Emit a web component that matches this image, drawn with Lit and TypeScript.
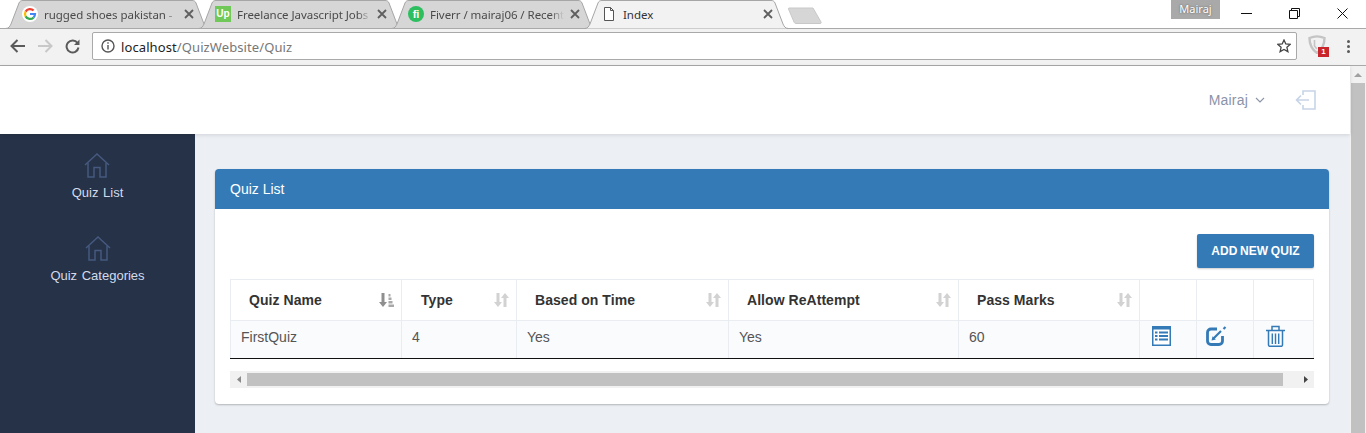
import { css, html, LitElement, svg } from "lit";
import { customElement } from "lit/decorators.js";

const tabShape = svg`<svg class="tab-bg" width="205" height="29" viewBox="0 0 205 29">
    <path d="M0.5 28.5 C4 28.5 5 26 6 24 L14 3 C15 1 16 0.5 18 0.5 H187 C189 0.5 190 1 191 3 L199 24 C200 26 201 28.5 204.5 28.5" />
</svg>`;

const houseIcon = html`<svg width="26" height="25" viewBox="0 0 26 25" fill="none" stroke="#46597f" stroke-width="1.5">
    <path d="M1 12 L13 1 L25 12" />
    <path d="M4 10 V24 H10 V14.5 H16 V24 H22 V10" />
</svg>`;

const sortIdle = html`<svg width="15" height="14" viewBox="0 0 15 14" fill="#d2d2d2">
    <path d="M2.5 0 H5.5 V9 H8 L4 14 L0 9 H2.5 Z" />
    <path d="M9.5 14 H12.5 V5 H15 L11 0 L7 5 H9.5 Z" />
</svg>`;

const sortActive = html`<svg width="15" height="14" viewBox="0 0 15 14" fill="#8f8f8f">
    <path d="M2.5 0 H5.5 V9 H8 L4 14 L0 9 H2.5 Z" />
    <path d="M9.5 1 H11.5 V3.5 H9.5 Z M9.5 4.5 H12.5 V7 H9.5 Z M9.5 8 H13.5 V10.5 H9.5 Z M9.5 11.5 H15 V14 H9.5 Z" fill="#a8a8a8" />
</svg>`;

const listIcon = html`<svg width="19" height="20" viewBox="0 0 19 20">
    <path fill="#337ab7" d="M0 0 H19 V20 H0 Z" />
    <path fill="#fff" d="M1.5 3.5 H17.5 V18.5 H1.5 Z" />
    <path fill="#337ab7" d="M3 5.5 H5.5 V7.5 H3 Z M7 5.5 H16 V7.5 H7 Z M3 9 H5.5 V11 H3 Z M7 9 H16 V11 H7 Z M3 12.5 H5.5 V14.5 H3 Z M7 12.5 H16 V14.5 H7 Z" />
</svg>`;

const editIcon = html`<svg width="21" height="20" viewBox="0 0 21 20" fill="none" stroke="#337ab7">
    <path stroke-width="2.8" d="M11 3 H5 C3 3 1.5 4.5 1.5 6.5 V15 C1.5 17 3 18.5 5 18.5 H13 C15 18.5 16.5 17 16.5 15 V10" />
    <path stroke-width="2.2" d="M7.5 12.5 L15 5" />
    <path stroke-width="1.4" d="M6.5 13.5 L7 11.5 L8.5 13 Z" />
    <path stroke-width="2.2" d="M17.5 3 L19.5 1" />
</svg>`;

const trashIcon = html`<svg width="19" height="22" viewBox="0 0 19 22" fill="none" stroke="#337ab7">
    <path stroke-width="1.5" d="M0 5.5 H19 M6 5 V1.5 H13 V5" />
    <path stroke-width="1.5" d="M2.5 6 V20 C2.5 21 3 21.3 4 21.3 H15 C16 21.3 16.5 21 16.5 20 V6" />
    <path stroke-width="1.4" d="M6.3 8.5 V19 M9.5 8.5 V19 M12.7 8.5 V19" />
</svg>`;

@customElement("app-root")
export class AppRoot extends LitElement {
    static styles = css`
        :host {
            display: flex;
            flex-direction: column;
            width: 1366px;
            height: 433px;
            overflow: hidden;
            font-family: "Liberation Sans", Arial, sans-serif;
            background: #fff;
        }

        .tabstrip {
            display: flex;
            height: 28px;
            padding-left: 5px;
            background: #fff;
            position: relative;
            flex: none;
        }

        .tab {
            position: relative;
            width: 205px;
            height: 28px;
            margin-right: -12px;
            flex: none;
            display: flex;
            align-items: center;
            padding: 0 16px 0 17px;
            box-sizing: border-box;
            font: 11.5px "Noto Sans", sans-serif;
            color: #4a4a4a;
        }

        .tab-bg {
            position: absolute;
            left: 0;
            top: 0;
        }

        .tab-bg path {
            fill: #d6d6d6;
            stroke: #a6a6a6;
            stroke-width: 1;
        }

        .tab.active {
            z-index: 2;
            color: #333;
        }

        .tab.active .tab-bg path {
            fill: #f2f2f2;
        }

        .favicon {
            position: relative;
            width: 16px;
            height: 16px;
            flex: none;
            margin-right: 6px;
        }

        .favicon.up {
            background: #6fc858;
            color: #fff;
            font: bold 10px "Liberation Sans", sans-serif;
            text-align: center;
            line-height: 15px;
        }

        .favicon.fi {
            background: #2dbe60;
            border-radius: 50%;
            color: #fff;
            font: bold 11px "Liberation Sans", sans-serif;
            text-align: center;
            line-height: 16px;
        }

        .tab-title {
            position: relative;
            flex: 1;
            min-width: 0;
            white-space: nowrap;
            letter-spacing: -0.05px;
            -webkit-mask-image: linear-gradient(to right, #000 90%, transparent 100%);
            mask-image: linear-gradient(to right, #000 90%, transparent 100%);
        }

        .tab.active .tab-title {
            -webkit-mask-image: none;
            mask-image: none;
        }

        .tab-close {
            position: relative;
            flex: none;
            margin-left: 6px;
            display: flex;
        }

        .new-tab {
            margin-left: 11px;
            margin-top: 7px;
            display: flex;
            flex: none;
        }

        .strip-spacer {
            flex: 1;
        }

        .profile {
            width: 49px;
            height: 19px;
            background: #a9a9a9;
            color: #fff;
            font: 11px "Noto Sans", sans-serif;
            line-height: 18px;
            text-align: center;
            text-shadow: 0 0 2px #555;
            flex: none;
        }

        .window-controls {
            display: flex;
            margin-left: 2px;
            flex: none;
        }

        .window-controls div {
            width: 48px;
            height: 28px;
            display: flex;
            align-items: flex-start;
            justify-content: center;
            padding-top: 8px;
            box-sizing: border-box;
        }

        .toolbar {
            display: flex;
            align-items: center;
            height: 38px;
            box-sizing: border-box;
            flex: none;
            background: #f2f2f2;
            border-top: 1px solid #a9a9a9;
            border-bottom: 1px solid #a9a9a9;
            padding: 0 0 2px 10px;
            position: relative;
        }

        .nav-btn {
            display: flex;
            width: 16px;
            justify-content: center;
            margin-right: 11px;
            flex: none;
        }

        .omnibox {
            display: flex;
            align-items: center;
            width: 1205px;
            height: 28px;
            margin-left: 1px;
            box-sizing: border-box;
            background: #fff;
            border: 1px solid #a9a9a9;
            border-radius: 2px;
            padding: 0 5px 0 8px;
            flex: none;
        }

        .url {
            margin-left: 6px;
            padding-top: 1px;
            flex: 1;
            color: #777;
            font-family: "Noto Sans", sans-serif;
            font-size: 13px;
            letter-spacing: 0.1px;
        }

        .url b {
            font-weight: normal;
            color: #222;
        }

        .extension {
            position: relative;
            margin-left: 11px;
            width: 22px;
            height: 22px;
            display: flex;
            flex: none;
        }

        .badge {
            position: absolute;
            left: 10px;
            top: 12px;
            width: 11px;
            height: 10px;
            background: #c8262c;
            color: #fff;
            font: bold 8px/10px "Liberation Sans", sans-serif;
            text-align: center;
        }

        .menu-dots {
            display: flex;
            flex-direction: column;
            gap: 2px;
            margin-left: 17px;
        }

        .menu-dots i {
            width: 3px;
            height: 3px;
            background: #5a5a5a;
            border-radius: 50%;
        }

        .viewport {
            display: flex;
            flex: 1;
            min-height: 0;
        }

        .page {
            flex: 1;
            display: flex;
            flex-direction: column;
            min-width: 0;
        }

        .page-scroll {
            width: 16px;
            flex: none;
            background: #f1f1f1;
            display: flex;
            flex-direction: column;
            align-items: center;
        }

        .scroll-up {
            height: 17px;
            display: flex;
            align-items: center;
            justify-content: center;
            flex: none;
        }

        .scroll-thumb {
            width: 14px;
            flex: 1;
            background: #c1c1c1;
        }

        header {
            height: 68px;
            flex: none;
            background: #fff;
            display: flex;
            align-items: center;
            justify-content: flex-end;
            padding: 0 34px 0 0;
            position: relative;
            z-index: 1;
            box-shadow: 0 1px 4px rgba(0, 0, 0, 0.12);
        }

        .user {
            color: #8b93a9;
            font-size: 14px;
            letter-spacing: 0.2px;
            display: flex;
            align-items: center;
            gap: 7px;
        }

        .logout {
            margin-left: 30px;
            display: flex;
        }

        .body {
            flex: 1;
            display: flex;
            min-height: 0;
        }

        nav {
            width: 195px;
            flex: none;
            background: #263248;
            display: flex;
            flex-direction: column;
            align-items: center;
            padding-top: 19px;
            box-sizing: border-box;
            gap: 23px;
        }

        .nav-item {
            display: flex;
            flex-direction: column;
            align-items: center;
            gap: 7px;
            height: 60px;
            color: #d3dbea;
            font-size: 13px;
            word-spacing: 1px;
        }

        main {
            flex: 1;
            min-width: 0;
            background: #eceff4;
            padding: 35px 21px 0 20px;
        }

        .card {
            background: #fff;
            border-radius: 4px;
            box-shadow: 0 1px 2px rgba(0, 0, 0, 0.25);
            overflow: hidden;
        }

        .card-head {
            height: 40px;
            background: #337ab7;
            color: #fff;
            display: flex;
            align-items: center;
            padding-left: 15px;
            font-size: 14px;
        }

        .card-body {
            padding: 25px 15px 16px;
        }

        .actions {
            display: flex;
            justify-content: flex-end;
            margin-bottom: 11px;
        }

        .add-btn {
            width: 117px;
            height: 34px;
            border: none;
            border-radius: 2px;
            background: #337ab7;
            color: #fff;
            font: bold 12px "Liberation Sans", sans-serif;
            letter-spacing: 0.1px;
            word-spacing: -1px;
            box-shadow: 0 1px 2px rgba(0, 0, 0, 0.2);
            padding: 0;
        }

        table {
            width: 1083px;
            table-layout: fixed;
            border-collapse: collapse;
            font-size: 14px;
        }

        th {
            height: 39px;
            padding: 0 0 1px;
            border: 1px solid #e9edf2;
            text-align: left;
            color: #333;
            font-weight: bold;
            font-size: 14px;
            letter-spacing: 0.05px;
        }

        .th-inner {
            display: flex;
            align-items: center;
            justify-content: space-between;
            padding-right: 7px;
        }

        td {
            height: 38px;
            padding: 0 10px 6px;
            box-sizing: border-box;
            border-left: 1px solid #e9edf2;
            border-right: 1px solid #e9edf2;
            border-bottom: 1px solid #111;
            background: #f9fbfd;
            color: #555;
        }

        td.icon {
            padding: 0 0 7px 12px;
        }

        td.icon.edit {
            padding-left: 9px;
        }

        td.icon svg {
            display: block;
        }

        .hscroll {
            display: flex;
            align-items: center;
            height: 17px;
            margin-top: 12px;
            background: #f1f1f1;
        }

        .hscroll span {
            display: flex;
            justify-content: center;
            width: 17px;
            flex: none;
        }

        .hscroll-thumb {
            width: 1036px;
            height: 13px;
            background: #c1c1c1;
            flex: none;
        }

        .hscroll .end {
            margin-left: auto;
        }
    `;

    private renderTab(fav: unknown, title: string, active = false) {
        return html`
            <div class="tab ${active ? "active" : ""}">
                ${tabShape} ${fav}
                <span class="tab-title">${title}</span>
                <span class="tab-close">
                    <svg width="10" height="10" viewBox="0 0 10 10" stroke="#5f5f5f" stroke-width="1.8">
                        <path d="M1 1 L9 9 M9 1 L1 9" />
                    </svg>
                </span>
            </div>
        `;
    }

    render() {
        const google = html`<svg class="favicon" viewBox="0 0 16 16" fill="none" stroke-width="2.2">
            <circle cx="8" cy="8" r="8" fill="#fff" />
            <path stroke="#ea4335" d="M11.6 4.6 A5 5 0 0 0 3.6 5.6" />
            <path stroke="#fbbc05" d="M3.6 5.6 A5 5 0 0 0 3.6 10.4" />
            <path stroke="#34a853" d="M3.6 10.4 A5 5 0 0 0 11.6 11.4" />
            <path stroke="#4285f4" d="M11.6 11.4 A5 5 0 0 0 13 8 H8" />
        </svg>`;
        const fileIcon = html`<svg class="favicon" viewBox="0 0 16 16" fill="#fff" stroke="#555">
            <path d="M3.5 1.5 H9.5 L12.5 4.5 V14.5 H3.5 Z M9.5 1.5 V4.5 H12.5" />
        </svg>`;

        return html`
            <div class="tabstrip">
                ${this.renderTab(google, "rugged shoes pakistan -")}
                ${this.renderTab(html`<span class="favicon up">Up</span>`, "Freelance Javascript Jobs")}
                ${this.renderTab(html`<span class="favicon fi">fi</span>`, "Fiverr / mairaj06 / Recent")}
                ${this.renderTab(fileIcon, "Index", true)}
                <span class="new-tab">
                    <svg width="34" height="17" viewBox="0 0 34 17">
                        <path d="M1 1 H25 L33 15 C33.5 16 33 16.5 32 16.5 H8 C7 16.5 6.5 16 6 15 L0.5 2 C0.2 1.5 0.5 1 1 1 Z" fill="#d6d6d6" stroke="#c8c8c8" />
                    </svg>
                </span>
                <span class="strip-spacer"></span>
                <div class="profile">Mairaj</div>
                <div class="window-controls">
                    <div>
                        <svg width="11" height="11" viewBox="0 0 11 11" stroke="#111"><path d="M0 5.5 H11" /></svg>
                    </div>
                    <div>
                        <svg width="11" height="11" viewBox="0 0 11 11" fill="none" stroke="#111">
                            <path d="M0.5 2.5 H8.5 V10.5 H0.5 Z M2.5 2.5 V0.5 H10.5 V8.5 H8.5" />
                        </svg>
                    </div>
                    <div>
                        <svg width="11" height="11" viewBox="0 0 11 11" stroke="#111"><path d="M0.5 0.5 L10.5 10.5 M10.5 0.5 L0.5 10.5" /></svg>
                    </div>
                </div>
            </div>

            <div class="toolbar">
                <span class="nav-btn">
                    <svg width="16" height="14" viewBox="0 0 16 14" fill="none" stroke="#5a5a5a" stroke-width="2">
                        <path d="M15 7 H2 M7.5 1 L1.5 7 L7.5 13" />
                    </svg>
                </span>
                <span class="nav-btn">
                    <svg width="16" height="14" viewBox="0 0 16 14" fill="none" stroke="#c8c8c8" stroke-width="2">
                        <path d="M1 7 H14 M8.5 1 L14.5 7 L8.5 13" />
                    </svg>
                </span>
                <span class="nav-btn">
                    <svg width="15" height="15" viewBox="0 0 15 15" fill="none" stroke="#5a5a5a" stroke-width="2">
                        <path d="M12.5 4 A6 6 0 1 0 13.5 8.5" />
                        <path d="M14.5 0.5 V6 H9 Z" fill="#5a5a5a" stroke="none" />
                    </svg>
                </span>
                <div class="omnibox">
                    <svg width="14" height="14" viewBox="0 0 14 14" fill="none" stroke="#555" stroke-width="1.4">
                        <circle cx="7" cy="7" r="6" />
                        <path d="M7 6 V10.5 M7 3.2 V4.8" />
                    </svg>
                    <span class="url"><b>localhost</b>/QuizWebsite/Quiz</span>
                    <svg width="14" height="14" viewBox="0 0 14 14" fill="none" stroke="#444" stroke-width="1.3">
                        <path d="M7 1 L8.8 5 L13.2 5.4 L9.9 8.3 L10.9 12.6 L7 10.4 L3.1 12.6 L4.1 8.3 L0.8 5.4 L5.2 5 Z" />
                    </svg>
                </div>
                <div class="extension">
                    <svg width="18" height="19" viewBox="0 0 18 19" fill="none" stroke="#c4c4c4" stroke-width="2.4">
                        <path d="M1.5 3 C6 1 12 1 16.5 3 C16.5 9 15 14 9 18 C3 14 1.5 9 1.5 3 Z" />
                        <path d="M6.5 5 V11 L9 14" stroke-width="1.6" />
                    </svg>
                    <span class="badge">1</span>
                </div>
                <div class="menu-dots"><i></i><i></i><i></i></div>
            </div>

            <div class="viewport">
                <div class="page">
                    <header>
                        <span class="user">
                            Mairaj
                            <svg width="10" height="6" viewBox="0 0 10 6" fill="none" stroke="#8b93a9" stroke-width="1.1">
                                <path d="M1 1 L5 5 L9 1" />
                            </svg>
                        </span>
                        <span class="logout">
                            <svg width="21" height="20" viewBox="0 0 21 20" fill="none" stroke="#c6d4e8" stroke-width="1.6">
                                <path d="M8 5 V1 H20 V19 H8 V15" />
                                <path d="M14 10 H1.5 M6 5.5 L1.5 10 L6 14.5" />
                            </svg>
                        </span>
                    </header>
                    <div class="body">
                        <nav>
                            <div class="nav-item">${houseIcon}<span>Quiz List</span></div>
                            <div class="nav-item">${houseIcon}<span>Quiz Categories</span></div>
                        </nav>
                        <main>
                            <section class="card">
                                <div class="card-head">Quiz List</div>
                                <div class="card-body">
                                    <div class="actions"><button class="add-btn">ADD NEW QUIZ</button></div>
                                    <table>
                                        <colgroup>
                                            <col style="width: 171px" />
                                            <col style="width: 115px" />
                                            <col style="width: 212px" />
                                            <col style="width: 230px" />
                                            <col style="width: 181px" />
                                            <col style="width: 57px" />
                                            <col style="width: 57px" />
                                            <col style="width: 60px" />
                                        </colgroup>
                                        <thead>
                                            <tr>
                                                <th><div class="th-inner" style="padding-left: 18px">Quiz Name ${sortActive}</div></th>
                                                <th><div class="th-inner" style="padding-left: 19px">Type ${sortIdle}</div></th>
                                                <th><div class="th-inner" style="padding-left: 18px">Based on Time ${sortIdle}</div></th>
                                                <th><div class="th-inner" style="padding-left: 18px">Allow ReAttempt ${sortIdle}</div></th>
                                                <th><div class="th-inner" style="padding-left: 18px">Pass Marks ${sortIdle}</div></th>
                                                <th></th>
                                                <th></th>
                                                <th></th>
                                            </tr>
                                        </thead>
                                        <tbody>
                                            <tr>
                                                <td>FirstQuiz</td>
                                                <td>4</td>
                                                <td>Yes</td>
                                                <td>Yes</td>
                                                <td>60</td>
                                                <td class="icon">${listIcon}</td>
                                                <td class="icon edit">${editIcon}</td>
                                                <td class="icon">${trashIcon}</td>
                                            </tr>
                                        </tbody>
                                    </table>
                                    <div class="hscroll">
                                        <span>
                                            <svg width="4" height="7" viewBox="0 0 4 7" fill="#8a8a8a"><path d="M4 0 V7 L0 3.5 Z" /></svg>
                                        </span>
                                        <div class="hscroll-thumb"></div>
                                        <span class="end">
                                            <svg width="4" height="7" viewBox="0 0 4 7" fill="#444"><path d="M0 0 V7 L4 3.5 Z" /></svg>
                                        </span>
                                    </div>
                                </div>
                            </section>
                        </main>
                    </div>
                </div>
                <div class="page-scroll">
                    <div class="scroll-up">
                        <svg width="8" height="4" viewBox="0 0 8 4" fill="#a0a0a0"><path d="M0 4 H8 L4 0 Z" /></svg>
                    </div>
                    <div class="scroll-thumb"></div>
                </div>
            </div>
        `;
    }
}
